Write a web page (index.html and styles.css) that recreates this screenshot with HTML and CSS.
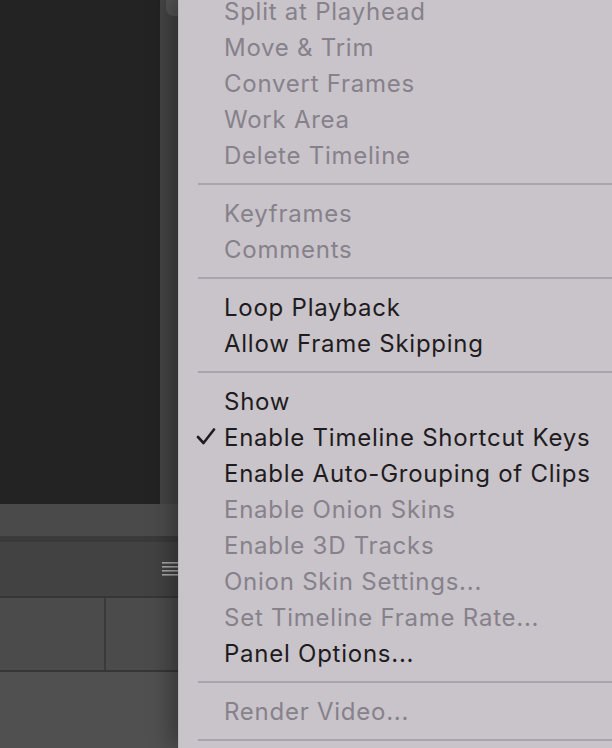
FILE: index.html
```html
<!DOCTYPE html>
<html>
<head>
<meta charset="utf-8">
<link rel="stylesheet" href="styles.css">
</head>
<body>
<div class="app">
  <div class="top">
    <div class="canvas"></div>
    <div class="track"><div class="thumb"></div></div>
  </div>
  <div class="timebar"><div class="timebar-main"></div><div class="timebar-side"></div></div>
  <div class="rule thick"></div>
  <div class="panel-header">
    <svg class="hamburger" width="16" height="14" viewBox="0 0 16 14">
      <rect x="0" y="0" width="16" height="1.6" fill="#a9a9a9"/>
      <rect x="0" y="4" width="16" height="1.6" fill="#a9a9a9"/>
      <rect x="0" y="8" width="16" height="1.6" fill="#a9a9a9"/>
      <rect x="0" y="12" width="16" height="1.6" fill="#a9a9a9"/>
    </svg>
  </div>
  <div class="rule"></div>
  <div class="tracks">
    <div class="cell first"></div>
    <div class="cell"></div>
  </div>
  <div class="rule"></div>
  <div class="bottom"></div>
</div>

<div class="menu">
  <div class="item off">Split at Playhead</div>
  <div class="item off">Move &amp; Trim</div>
  <div class="item off">Convert Frames</div>
  <div class="item off">Work Area</div>
  <div class="item off">Delete Timeline</div>
  <div class="sep"></div>
  <div class="item off">Keyframes</div>
  <div class="item off">Comments</div>
  <div class="sep"></div>
  <div class="item">Loop Playback</div>
  <div class="item">Allow Frame Skipping</div>
  <div class="sep"></div>
  <div class="item">Show</div>
  <div class="item checked">
    <svg class="check" width="20" height="18" viewBox="0 0 20 18">
      <polyline points="2,9 7.5,15 18,1.5" fill="none" stroke="#1e1c20" stroke-width="2.6" stroke-linecap="round" stroke-linejoin="round"/>
    </svg>Enable Timeline Shortcut Keys</div>
  <div class="item">Enable Auto-Grouping of Clips</div>
  <div class="item off">Enable Onion Skins</div>
  <div class="item off">Enable 3D Tracks</div>
  <div class="item off">Onion Skin Settings...</div>
  <div class="item off">Set Timeline Frame Rate...</div>
  <div class="item">Panel Options...</div>
  <div class="sep"></div>
  <div class="item off">Render Video...</div>
  <div class="sep"></div>
</div>
</body>
</html>
```

FILE: styles.css
```css
html, body {
  margin: 0;
  padding: 0;
}
body {
  width: 612px;
  height: 748px;
  overflow: hidden;
  position: relative;
  background: #232323;
  font-family: "Inter", "Noto Sans", sans-serif;
}
.app {
  display: flex;
  flex-direction: column;
  width: 178px;
  height: 748px;
}
.top {
  display: flex;
  height: 504px;
}
.canvas {
  width: 160px;
  background: #232323;
}
.track {
  flex: 1;
  background: #444444;
  position: relative;
}
.thumb {
  position: absolute;
  left: 6px;
  right: 0;
  top: 0;
  height: 16px;
  background: #555555;
  border-bottom-left-radius: 8px;
}
.timebar {
  display: flex;
  height: 32px;
}
.timebar-main {
  width: 160px;
  background: #4a4a4a;
}
.timebar-side {
  flex: 1;
  background: #4c4c4c;
}
.rule {
  height: 2px;
  background: #363636;
}
.rule.thick {
  height: 6px;
  background: #3a3a3a;
}
.panel-header {
  height: 54px;
  background: #424242;
  display: flex;
  justify-content: flex-end;
  align-items: flex-start;
}
.hamburger {
  margin-top: 20px;
}
.tracks {
  display: flex;
  height: 72px;
  background: #4b4b4b;
}
.cell.first {
  width: 104px;
  border-right: 2px solid #3a3a3a;
}
.bottom {
  flex: 1;
  background: #505050;
}
.menu {
  position: absolute;
  left: 178px;
  top: -7px;
  right: 0;
  bottom: 0;
  overflow: hidden;
  background: #c9c4ca;
  border-left: 1px solid #bdb8be;
  box-shadow: -6px 0 22px rgba(0, 0, 0, 0.35);
}
.item {
  height: 35px;
  padding-top: 1px;
  line-height: 36px;
  padding-left: 45px;
  font-size: 24px;
  letter-spacing: 0.75px;
  color: #1e1c20;
  white-space: nowrap;
  position: relative;
}
.item.off {
  color: #86818a;
}
.check {
  position: absolute;
  left: 17px;
  top: 9px;
}
.sep {
  height: 22px;
  display: flex;
  align-items: center;
  padding-left: 19px;
}
.sep::after {
  content: "";
  flex: 1;
  height: 2px;
  background: #a9a4ab;
}
```
